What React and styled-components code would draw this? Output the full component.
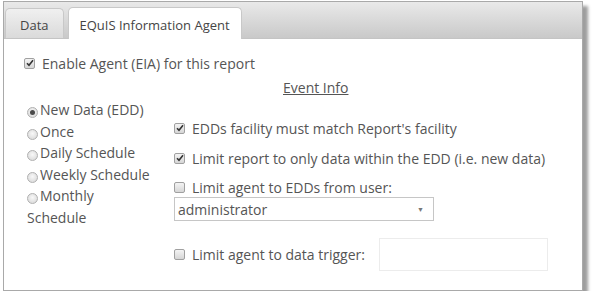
import React, { useState } from "react";
import styled, { createGlobalStyle } from "styled-components";

const Global = createGlobalStyle`
  html, body {
    margin: 0;
    padding: 0;
    background: #ffffff;
  }
  body {
    font-family: "Open Sans", "Liberation Sans", sans-serif;
    font-size: 14px;
    color: #555555;
  }
`;

const Panel = styled.div`
  margin: 1px 0 0 3px;
  width: 580px;
  height: 290px;
  box-sizing: border-box;
  border: 1px solid #a9a9a9;
  background: #ffffff;
  box-shadow: 5px 5px 3px rgba(0, 0, 0, 0.38);
  display: flex;
  flex-direction: column;
`;

const TabBar = styled.div`
  height: 37px;
  box-sizing: border-box;
  display: flex;
  align-items: flex-end;
  gap: 4px;
  padding-left: 1px;
  background: linear-gradient(#e9e9e9, #c9c9c9);
  border-bottom: 1px solid #c4c4c4;
`;

const Tab = styled.div`
  box-sizing: border-box;
  height: ${(p) => (p.$active ? "32px" : "30px")};
  margin-bottom: ${(p) => (p.$active ? "-1px" : "0")};
  padding: 2px ${(p) => (p.$active ? "11px" : "14px")} 0;
  display: flex;
  align-items: center;
  border: 1px solid #c8c8c8;
  border-bottom: none;
  border-radius: 5px 5px 0 0;
  background: ${(p) =>
    p.$active ? "#ffffff" : "linear-gradient(#f0f0f0, #dadada)"};
  color: #454545;
  font-size: 13px;
`;

const Body = styled.div`
  flex: 1;
  padding: 14px 0 0 20px;
  display: flex;
  flex-direction: column;
`;

const Row = styled.label`
  display: flex;
  align-items: center;
  gap: 7px;
  height: 20px;
  margin-bottom: ${(p) => p.$gap || 0}px;
`;

const Box = styled.span`
  width: 9px;
  height: 9px;
  flex: none;
  border: 1px solid #a0a0a0;
  border-radius: 2px;
  background: linear-gradient(#f4f4f4, #d6d6d6);
  display: flex;
  align-items: center;
  justify-content: center;
`;

const Dot = styled.span`
  display: inline-flex;
  vertical-align: 0;
  width: 9px;
  height: 9px;
  margin-right: 2px;
  border: 1px solid #b0b0b0;
  border-radius: 50%;
  background: radial-gradient(circle at 50% 40%, #f8f8f8, #d4d4d4);
  align-items: center;
  justify-content: center;
  &::after {
    content: "";
    width: 5px;
    height: 5px;
    border-radius: 50%;
    background: ${(p) => (p.$on ? "#4a4a4a" : "transparent")};
  }
`;

const EventInfo = styled.div`
  margin-left: 259px;
  margin-top: 5px;
  text-decoration: underline;
  line-height: 20px;
`;

const Columns = styled.div`
  display: flex;
`;

const Radios = styled.div`
  width: 147px;
  padding-left: 3px;
  padding-top: 1px;
  display: flex;
  flex-direction: column;
`;

const RadioItem = styled.label`
  display: block;
  line-height: 21.5px;
  width: 125px;
`;

const Options = styled.div`
  padding-top: 20px;
  display: flex;
  flex-direction: column;
`;

const Select = styled.div`
  box-sizing: border-box;
  width: 260px;
  height: 24px;
  margin-bottom: 17px;
  border: 1px solid #c6c6c6;
  display: flex;
  align-items: center;
  justify-content: space-between;
  padding: 0 9px 0 3px;
  color: #555;
`;

const Caret = styled.span`
  font-size: 7px;
  color: #777;
`;

const Trigger = styled.div`
  display: flex;
  align-items: center;
  gap: 14px;
`;

const TriggerInput = styled.input`
  box-sizing: border-box;
  width: 169px;
  height: 33px;
  border: 1px solid #ececec;
  outline: none;
`;

function Check({ on }) {
  return (
    <Box>
      {on && (
        <svg width="8" height="8" viewBox="0 0 8 8">
          <path
            d="M1 4.2 L3 6.3 L7 1.3"
            fill="none"
            stroke="#333"
            strokeWidth="1.6"
          />
        </svg>
      )}
    </Box>
  );
}

const schedules = [
  "New Data (EDD)",
  "Once",
  "Daily Schedule",
  "Weekly Schedule",
  "Monthly Schedule",
];

export default function App() {
  const [picked] = useState(0);
  return (
    <>
      <Global />
      <Panel>
        <TabBar>
          <Tab>Data</Tab>
          <Tab $active>EQuIS Information Agent</Tab>
        </TabBar>
        <Body>
          <Row>
            <Check on />
            Enable Agent (EIA) for this report
          </Row>
          <EventInfo>Event Info</EventInfo>
          <Columns>
            <Radios>
              {schedules.map((s, i) => (
                <RadioItem key={s}>
                  <Dot $on={i === picked} />
                  {s}
                </RadioItem>
              ))}
            </Radios>
            <Options>
              <Row $gap={10}>
                <Check on />
                EDDs facility must match Report's facility
              </Row>
              <Row $gap={9}>
                <Check on />
                Limit report to only data within the EDD (i.e. new data)
              </Row>
              <Row>
                <Check />
                Limit agent to EDDs from user:
              </Row>
              <Select>
                administrator
                <Caret>▼</Caret>
              </Select>
              <Trigger>
                <Row>
                  <Check />
                  Limit agent to data trigger:
                </Row>
                <TriggerInput />
              </Trigger>
            </Options>
          </Columns>
        </Body>
      </Panel>
    </>
  );
}
